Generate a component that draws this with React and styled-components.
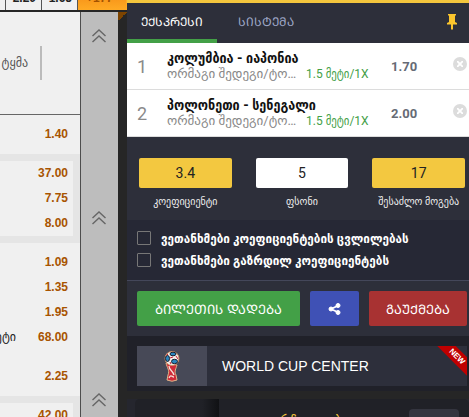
import React from "react";
import styled, { createGlobalStyle } from "styled-components";

const GlobalStyle = createGlobalStyle`
  * {
    box-sizing: border-box;
  }
  body {
    margin: 0;
    background: #262626;
    font-family: Roboto, "DejaVu Sans", sans-serif;
  }
  button, input {
    font-family: inherit;
  }
`;

const condensed = `Roboto, "DejaVu Sans Condensed", sans-serif`;

const Page = styled.div`
  display: flex;
  height: 100vh;
  overflow: hidden;
`;

const Board = styled.main`
  flex: 0 0 127px;
  display: flex;
  flex-direction: column;
  overflow: hidden;
`;

const TopOdds = styled.div`
  display: flex;
  flex: none;
  height: 12px;
  border-bottom: 2px solid #262626;
`;

const TopOdd = styled.div`
  flex: 0 0 ${(p) => p.$width}px;
  display: flex;
  align-items: flex-end;
  justify-content: ${(p) => (p.$active ? "center" : "flex-end")};
  padding-right: 5px;
  overflow: hidden;
  border-right: 1px solid ${(p) => (p.$active ? "#ffaa24" : "#555")};
  background: ${(p) => (p.$active ? "linear-gradient(#f99a1c, #ffaa24)" : "#f0f0f0")};
  color: ${(p) => (p.$active ? "#a35200" : "#222")};
  font: bold 12px/23px "Liberation Sans", sans-serif;
`;

const Columns = styled.div`
  display: flex;
  flex: 1;
`;

const Odds = styled.section`
  flex: 0 0 81px;
  min-width: 0;
  overflow: hidden;
  border-right: 1px solid #4d4d4d;
  background: #f0f0f0;
`;

const OddsHead = styled.header`
  display: flex;
  align-items: center;
  justify-content: flex-end;
  gap: 12px;
  height: 103px;
  padding-right: 38px;
  border-bottom: 1px solid #666;
  color: #555;
  font-size: 12px;
  white-space: nowrap;
`;

const HeadRule = styled.span`
  flex: none;
  width: 2px;
  height: 34px;
  background: #bbb;
`;

const OddsGroup = styled.div`
  padding: 7px 7px 7px 0;
  background: ${(p) => (p.$shaded ? "#e5e5e5" : "#f0f0f0")};
`;

const OddsRow = styled.div`
  display: flex;
  justify-content: flex-end;
  gap: 22px;
  padding-right: 5px;
  background: #f0f0f0;
  color: #a85400;
  font: bold 12px/25px "Liberation Sans", sans-serif;
`;

const RowName = styled.span`
  color: #222;
  font: 12px/25px "DejaVu Sans", sans-serif;
  white-space: nowrap;
`;

const Collapser = styled.aside`
  flex: 0 0 37px;
  background: #bdbdbd;
`;

const CollapseButton = styled.button`
  display: flex;
  align-items: flex-start;
  width: 100%;
  height: 182px;
  padding: 17px 11px 0;
  border: 0;
  background: none;
`;

const Fold = styled.span`
  flex: 1;
  background: linear-gradient(to bottom right, #7d4400 50%, #262626 50%) no-repeat top / 9px 9px;
`;

const Slip = styled.aside`
  flex: 1;
  min-width: 0;
  border-top: 3px solid #f4c63d;
  background: #2d2f3a;
`;

const Tabs = styled.nav`
  display: flex;
  align-items: stretch;
  height: 40px;
  padding-right: 12px;
`;

const Tab = styled.button`
  padding: 0 ${(p) => (p.$active ? 14 : 21)}px;
  border: 0;
  border-bottom: 4px solid ${(p) => (p.$active ? "#43a047" : "transparent")};
  background: none;
  color: ${(p) => (p.$active ? "#fff" : "#9fa8c8")};
  font-size: 12px;
`;

const PinButton = styled.button`
  margin-left: auto;
  padding: 0;
  border: 0;
  background: none;
`;

const Bet = styled.article`
  display: grid;
  grid-template-columns: 30px 139px 1fr 14px;
  align-items: center;
  height: 47px;
  padding: 0 2px 0 10px;
  border-bottom: 1px solid #dcdcdc;
  background: #fff;
`;

const BetIndex = styled.span`
  color: #8a8a8a;
  font-size: 18px;
`;

const BetInfo = styled.div`
  white-space: nowrap;
`;

const BetTitle = styled.h3`
  margin: 0;
  color: #111;
  font-family: ${condensed};
  font-size: 14px;
  font-weight: 700;
  line-height: 16px;
`;

const BetMarket = styled.div`
  display: flex;
  gap: 9px;
  color: #888;
  font-size: 12px;
  line-height: 16px;
`;

const MarketName = styled.span`
  flex: 0 0 130px;
  overflow: hidden;
  font-size: 13px;
  text-overflow: ellipsis;
`;

const MarketPick = styled.span`
  color: #43a047;
  font-family: ${condensed};
`;

const BetOdd = styled.strong`
  padding-left: 85px;
  color: #666b75;
  font-size: 13px;
`;

const RemoveButton = styled.button`
  display: flex;
  align-items: center;
  justify-content: center;
  width: 14px;
  height: 14px;
  margin-bottom: 4px;
  padding: 0;
  border: 0;
  border-radius: 50%;
  background: #dcdcdc;
`;

const Totals = styled.div`
  display: grid;
  grid-template-columns: repeat(3, 1fr);
  gap: 24px;
  height: 83px;
  padding: 21px 4px 0 12px;
`;

const Total = styled.label`
  display: flex;
  flex-direction: column;
  align-items: center;
  gap: 6px;
  color: #eee;
  font-size: 10px;
  line-height: 16px;
  white-space: nowrap;
`;

const TotalField = styled.input`
  width: 100%;
  height: 30px;
  padding: 0;
  border: 0;
  border-radius: 2px;
  background: ${(p) => (p.$plain ? "#fff" : "#f3c840")};
  color: #222;
  font-size: 14px;
  text-align: center;
`;

const Options = styled.div`
  display: flex;
  flex-direction: column;
  height: 61px;
  padding: 7px 0 0 10px;
  border-bottom: 1px solid #44475a;
  background: #262835;
`;

const Option = styled.label`
  display: flex;
  align-items: center;
  gap: 10px;
  height: 22px;
  color: #fff;
  font-family: ${condensed};
  font-size: 13px;
  font-weight: 700;
  white-space: nowrap;
`;

const Tick = styled.input`
  appearance: none;
  width: 14px;
  height: 14px;
  margin: 0;
  border: 1px solid #777;
  border-radius: 1px;
`;

const Actions = styled.div`
  display: grid;
  grid-template-columns: 163fr 49fr 98fr;
  gap: 10px;
  padding: 10px 2px 10px 10px;
`;

const Action = styled.button`
  display: flex;
  align-items: center;
  justify-content: center;
  min-width: 0;
  height: 35px;
  padding: 0;
  border: 0;
  border-radius: 2px;
  background: ${(p) => p.$color};
  color: #fff;
  font-size: 13px;
  white-space: nowrap;
`;

const PromoArea = styled.div`
  padding: 10px 2px 5px 10px;
  background: #202129;
`;

const Promo = styled.a`
  position: relative;
  display: flex;
  align-items: center;
  gap: 15px;
  height: 40px;
  overflow: hidden;
  background: #2d2f3b;
  color: #fff;
  font: 14px "Liberation Sans", sans-serif;
  text-decoration: none;
`;

const PromoImage = styled.span`
  display: flex;
  align-items: center;
  justify-content: center;
  width: 70px;
  height: 40px;
  background: #474957;
`;

const NewRibbon = styled.span`
  position: absolute;
  top: 4px;
  right: -25px;
  width: 70px;
  background: #c00000;
  color: #fff;
  font: bold 8px/13px "Liberation Sans", sans-serif;
  text-align: center;
  transform: rotate(45deg);
`;

const GameArea = styled.div`
  height: 100px;
  padding-left: 8px;
  border-top: 8px solid #262626;
  background: #25262e;
`;

const Game = styled.article`
  display: flex;
  height: 80px;
  border-radius: 5px;
  background: #202127;
`;

const GameImage = styled.div`
  flex: 0 0 84px;
  border-radius: 5px 0 0 5px;
  background: linear-gradient(to right, #202127 80%, #101114);
`;

const GameName = styled.h4`
  flex: 1;
  margin: 12px 0 0;
  color: #f4c63d;
  font-size: 14px;
  font-weight: 400;
  line-height: 20px;
  text-align: center;
`;

const GameButton = styled.button`
  width: 50px;
  height: 30px;
  margin: 10px 10px 0 0;
  border: 0;
  border-radius: 4px;
  background: #34353f;
`;

const Chevrons = () => (
  <svg width="14" height="14" viewBox="0 0 14 14" fill="none" stroke="#666" strokeWidth="1.4">
    <path d="M.5 7 7 1l6.500 6M.5 13 7 7l6.500 6" />
  </svg>
);

const Pin = () => (
  <svg width="10" height="17" viewBox="0 0 10 17" fill="#fbc52d">
    <path d="M1 1h8v1.500H8V9l2 1v1.500H6V16l-1 1-1-1v-4.500H0V10l2-1V2.500H1z" />
  </svg>
);

const Share = () => (
  <svg width="13" height="12" viewBox="0 0 13 12" fill="#fff" stroke="#fff">
    <path d="M10.500 2.500 3 6l7.500 3.500" fill="none" strokeWidth="1.800" />
    <circle cx="10" cy="2.500" r="2" />
    <circle cx="3" cy="6" r="2" />
    <circle cx="10" cy="9.500" r="2" />
  </svg>
);

const Cross = () => (
  <svg width="6" height="6" viewBox="0 0 6 6" stroke="#fff" strokeWidth="1.800">
    <path d="M0 0l6 6M6 0 0 6" />
  </svg>
);

const Trophy = () => (
  <svg width="16" height="31" viewBox="0 0 16 31">
    <path d="M2 12c1 5 4 7 2 12l-1 5q5 2.500 10 0l-1-5c-2-4 0-6 1-10z" fill="#cf2a38" stroke="#ddb58a" />
    <path d="M5 15c0 4 4 5 5 9M5 27c2-4 3-1 5-1" fill="none" stroke="#f6e0d6" strokeWidth="1.300" />
    <circle cx="8" cy="7.500" r="7" fill="#f4eee8" stroke="#c98c62" />
    <ellipse cx="9" cy="3" rx="3" ry="1.800" fill="#2a84bd" stroke="#17202f" />
    <ellipse cx="3.500" cy="7.500" rx="2" ry="3" fill="#2a84bd" stroke="#17202f" />
    <ellipse cx="10.500" cy="10.500" rx="3" ry="2.200" fill="#2a84bd" stroke="#17202f" />
    <path d="m6 7 3-1M12 5l2 3M4 3 2.500 4.500M6 11l1 2" stroke="#c91f35" />
  </svg>
);

const topOdds = [
  { value: "", width: 6 },
  { value: "2.20", width: 36 },
  { value: "1.65", width: 36 },
  { value: "+177", width: 49, active: true },
];

const groups = [
  { rows: [["1.40"]] },
  { shaded: true, rows: [["37.00"], ["7.75"], ["8.00"]] },
  { rows: [["1.09"], ["1.35"], ["1.95"], ["68.00", "ეტი"]] },
  { rows: [["2.25"]] },
  { shaded: true, rows: [["42.00"]] },
];

const bets = [
  { title: "კოლუმბია - იაპონია", odd: "1.70" },
  { title: "პოლონეთი - სენეგალი", odd: "2.00" },
];

const App = () => (
  <>
    <GlobalStyle />
    <Page>
      <Board>
        <TopOdds>
          {topOdds.map((o) => (
            <TopOdd key={o.value} $width={o.width} $active={o.active}>
              {o.value}
            </TopOdd>
          ))}
        </TopOdds>
        <Columns>
          <Odds>
            <OddsHead>
              <span>ტყმა</span>
              <HeadRule />
            </OddsHead>
            {groups.map((g, i) => (
              <OddsGroup key={i} $shaded={g.shaded}>
                {g.rows.map(([value, name]) => (
                  <OddsRow key={value}>
                    {name && <RowName>{name}</RowName>}
                    {value}
                  </OddsRow>
                ))}
              </OddsGroup>
            ))}
          </Odds>
          <Collapser>
            {[0, 1, 2].map((n) => (
              <CollapseButton key={n} aria-label="collapse">
                <Chevrons />
              </CollapseButton>
            ))}
          </Collapser>
          <Fold />
        </Columns>
      </Board>

      <Slip>
        <Tabs>
          <Tab $active>ᲔᲥᲡᲞᲠᲔᲡᲘ</Tab>
          <Tab>ᲡᲘᲡᲢᲔᲛᲐ</Tab>
          <PinButton aria-label="pin">
            <Pin />
          </PinButton>
        </Tabs>
        {bets.map((bet, i) => (
          <Bet key={bet.title}>
            <BetIndex>{i + 1}</BetIndex>
            <BetInfo>
              <BetTitle>{bet.title}</BetTitle>
              <BetMarket>
                <MarketName>ორმაგი შედეგი/ტოტალი</MarketName>
                <MarketPick>1.5 მეტი/1X</MarketPick>
              </BetMarket>
            </BetInfo>
            <BetOdd>{bet.odd}</BetOdd>
            <RemoveButton aria-label="remove">
              <Cross />
            </RemoveButton>
          </Bet>
        ))}
        <Totals>
          <Total>
            <TotalField defaultValue="3.4" readOnly />
            კოეფიციენტი
          </Total>
          <Total>
            <TotalField $plain defaultValue="5" />
            ფსონი
          </Total>
          <Total>
            <TotalField defaultValue="17" readOnly />
            შესაძლო მოგება
          </Total>
        </Totals>
        <Options>
          <Option>
            <Tick type="checkbox" />
            ვეთანხმები კოეფიციენტების ცვლილებას
          </Option>
          <Option>
            <Tick type="checkbox" />
            ვეთანხმები გაზრდილ კოეფიციენტებს
          </Option>
        </Options>
        <Actions>
          <Action $color="#43a047">ᲑᲘᲚᲔᲗᲘᲡ ᲓᲐᲓᲔᲑᲐ</Action>
          <Action $color="#3f51b5" aria-label="share">
            <Share />
          </Action>
          <Action $color="#a83232">ᲒᲐᲣᲥᲛᲔᲑᲐ</Action>
        </Actions>
        <PromoArea>
          <Promo href="#world-cup">
            <PromoImage>
              <Trophy />
            </PromoImage>
            WORLD CUP CENTER
            <NewRibbon>NEW</NewRibbon>
          </Promo>
        </PromoArea>
        <GameArea>
          <Game>
            <GameImage />
            <GameName>რჩეულები</GameName>
            <GameButton aria-label="open" />
          </Game>
        </GameArea>
      </Slip>
    </Page>
  </>
);

export default App;
